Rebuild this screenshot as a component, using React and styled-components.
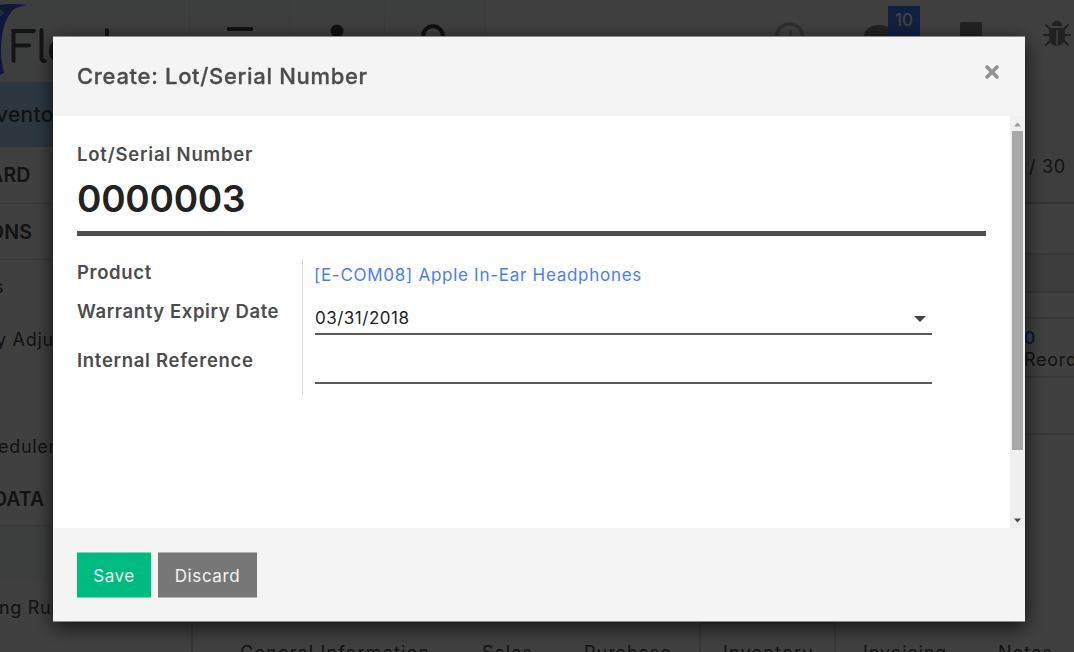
import React from "react";
import styled, { createGlobalStyle } from "styled-components";

const Global = createGlobalStyle`
  * { box-sizing: border-box; }
  html, body { margin: 0; height: 100%; overflow: hidden; background: #fff; }
  body { font-family: Inter, "Liberation Sans", sans-serif; color: #484848; }
  button, input { font: inherit; }
`;

const Screen = styled.div`
  width: 1074px;
  height: 652px;
  overflow: hidden;
  display: flex;
  flex-direction: column;
`;

/* page behind the dialog */
const TopBar = styled.header`
  flex: none;
  height: 82px;
  display: flex;
  background: #fcfcfc;
  border-bottom: 1px solid #ececec;
`;
const LogoCell = styled.div`
  flex: none;
  width: 190px;
  height: 82px;
  background: #f4f8f5;
  border-right: 1px solid #e6eae8;
`;
const NavCell = styled.div`
  flex: none;
  width: ${(p) => p.$w}px;
  height: 81px;
  padding-top: 24px;
  background: #f4f8f5;
  border-right: 1px solid #e6eae8;
  display: flex;
  justify-content: center;
`;
const TrayIcons = styled.div`
  flex: 1;
  padding: 20px 0 0 288px;
  display: flex;
  align-items: flex-start;
`;
const TraySlot = styled.div`
  position: relative;
  width: ${(p) => p.$w}px;
  flex: none;
`;
const Badge = styled.span`
  position: absolute;
  left: 25px;
  top: -14px;
  width: 32px;
  height: 32px;
  background: #4880ff;
  color: #ffffff;
  font-size: 17px;
  font-weight: 500;
  line-height: 28px;
  text-align: center;
`;
const Columns = styled.div`
  flex: 1;
  min-height: 0;
  display: flex;
`;
const Sidebar = styled.nav`
  width: 193px;
  flex: none;
  border-right: 2px solid #d2d2d2;
  overflow: hidden;
`;
const SideItem = styled.div`
  height: ${(p) => p.$h}px;
  display: flex;
  align-items: center;
  white-space: nowrap;
  font-size: ${(p) => p.$size || 18}px;
  font-weight: ${(p) => p.$weight || 400};
  letter-spacing: ${(p) => p.$ls ?? 0.7}px;
  color: ${(p) => p.$color || "#484848"};
  background: ${(p) => p.$bg || "transparent"};
  border-bottom: ${(p) => (p.$line ? "1px solid #e4e4e4" : "none")};
  text-indent: ${(p) => p.$indent || 0}px;
`;
const Content = styled.main`
  flex: 1;
  display: flex;
  flex-direction: column;
  align-items: stretch;
`;
const Band = styled.div`
  flex: none;
  height: ${(p) => p.$h}px;
  padding: ${(p) => p.$pad || "0"};
  background: ${(p) => p.$bg || "#ffffff"};
  border-bottom: 2px solid ${(p) => p.$line || "#dedede"};
  font-size: 18px;
  line-height: 22px;
  letter-spacing: 0.7px;
  overflow: hidden;
  white-space: nowrap;
`;
const StatValue = styled.div`
  color: #4068e0;
  font-weight: 600;
  font-size: 17px;
  line-height: 21px;
`;
const TabRow = styled.div`
  margin-top: 187px;
  height: 60px;
  display: flex;
  padding-left: 19px;
`;
const Tab = styled.div`
  flex: none;
  width: ${(p) => p.$w}px;
  padding: 16px 0 0 ${(p) => p.$pl ?? 28}px;
  font-size: 18px;
  line-height: 26px;
  letter-spacing: ${(p) => p.$ls ?? 1}px;
  white-space: nowrap;
  border: ${(p) => (p.$on ? "2px solid #dcdcdc" : "2px solid transparent")};
  border-width: 2px ${(p) => (p.$on ? 2 : 0)}px 0;
  border-radius: 4px 4px 0 0;
`;

/* dialog */
const Backdrop = styled.div`
  position: fixed;
  inset: 0;
  background: rgba(0, 0, 0, 0.75);
  display: flex;
  align-items: flex-start;
  padding: 36px 49px 0 53px;
`;
const Dialog = styled.section`
  width: 972px;
  height: 586px;
  display: flex;
  flex-direction: column;
  background: #f4f4f4;
  border: solid #8a8a8a;
  border-width: 1px 0;
  box-shadow: 0 5px 20px rgba(0, 0, 0, 0.75);
`;
const DialogHeader = styled.header`
  height: 79px;
  flex: none;
  display: flex;
  justify-content: space-between;
  padding: 23px 25px 0 24px;
`;
const Title = styled.h3`
  margin: 0;
  font-size: 22px;
  line-height: 32px;
  font-weight: 500;
  letter-spacing: 0.68px;
  color: #4c4c4c;
  -webkit-text-stroke: 0.3px #4c4c4c;
`;
const Close = styled.button`
  padding: 4px 0 0;
  border: 0;
  background: none;
  height: 24px;
  display: flex;
`;
const DialogBody = styled.div`
  height: 412px;
  flex: none;
  display: flex;
  background: #fff;
`;
const Form = styled.div`
  flex: 1;
  padding: 26px 24px 0;
`;
const Label = styled.label`
  display: block;
  font-size: 18.5px;
  line-height: 24px;
  font-weight: 600;
  letter-spacing: ${(p) => p.$ls ?? 0.65}px;
  color: #4c4c4c;
  white-space: nowrap;
`;
const SerialNumber = styled.div`
  width: 909px;
  height: 70px;
  padding-top: 9px;
  font-size: 37px;
  line-height: 48px;
  font-weight: 600;
  letter-spacing: -0.25px;
  color: #222;
  border-bottom: 5px solid #4e4e4e;
`;
const Group = styled.div`
  display: flex;
  margin-top: 23px;
  height: 136px;
`;
const Labels = styled.div`
  width: 226px;
  flex: none;
  border-right: 1px solid #d6d6d6;
  display: flex;
  flex-direction: column;
`;
const LabelSlot = styled.div`
  height: ${(p) => p.$h}px;
  padding-top: 1px;
  flex: none;
`;
const Values = styled.div`
  margin-left: 12px;
  width: 617px;
`;
const ProductLink = styled.a`
  display: block;
  height: 41px;
  padding-top: 3px;
  font-size: 17px;
  line-height: 26px;
  letter-spacing: 0.72px;
  text-indent: -1px;
  color: #4c7cf5;
`;
const Field = styled.div`
  height: ${(p) => p.$h}px;
  display: flex;
  justify-content: space-between;
  padding: 5px 5px 0 0;
  font-size: 17px;
  line-height: 26px;
  letter-spacing: 0.5px;
  color: #222;
  border-bottom: 2px solid #5a5a5a;
`;
const Scrollbar = styled.div`
  width: 15px;
  background: #f0f0f0;
  display: flex;
  flex-direction: column;
  align-items: center;
  justify-content: space-between;
`;
const ScrollTop = styled.div`
  display: flex;
  flex-direction: column;
  align-items: center;
  svg { margin: 6px 0 4px; display: block; }
`;
const Thumb = styled.div`
  width: 11px;
  height: 319px;
  background: #a8a8a8;
`;
const ScrollDown = styled.svg`
  display: block;
  margin-bottom: 5px;
`;
const DialogFooter = styled.footer`
  flex: 1;
  padding: 24px;
  display: flex;
  gap: 7px;
`;
const Button = styled.button`
  width: ${(p) => p.$w}px;
  height: 46px;
  padding: 1px 0 0;
  border: solid ${(p) => p.$edge};
  border-width: 1px 0;
  background: ${(p) => p.$bg};
  color: #f4f4f4;
  font-size: 17px;
  letter-spacing: ${(p) => p.$ls}px;
`;

export default function App() {
  return (
    <>
      <Global />
      <Screen>
        <TopBar>
          <LogoCell>
            <svg width="189" height="81" viewBox="0 0 189 81">
              <path d="M0 5 Q10 3 27 5 Q18 7 14 9 Q2 20 1 48 Q1 62 4 73 L0 75Z" fill="#4060e8" />
              <path d="M0 9 Q4 11 4 13 L0 17Z" fill="#8ca8f8" />
              <g fill="none" stroke="#505050" strokeWidth="4" strokeLinecap="round">
                <path d="M13.500 61V31H34M14 45.500H29M41.500 30V58Q41.500 61 45 61M107 30V61" />
                <circle cx="62" cy="51" r="11" />
              </g>
            </svg>
          </LogoCell>
          <NavCell $w={100}>
            <svg width="28" height="30"><path d="M1 5h26M1 15h26" stroke="#404040" strokeWidth="4" /></svg>
          </NavCell>
          <NavCell $w={95}>
            <svg width="28" height="30"><circle cx="14" cy="7" r="6.500" fill="#404040" /></svg>
          </NavCell>
          <NavCell $w={101}>
            <svg width="28" height="30"><circle cx="12" cy="12" r="9.800" fill="none" stroke="#404040" strokeWidth="4" /></svg>
          </NavCell>
          <TrayIcons>
            <TraySlot $w={89}>
              <svg width="32" height="32">
                <circle cx="15.500" cy="17" r="13" fill="none" stroke="#bcbcbc" strokeWidth="3.500" />
                <path d="M16.500 10v10" stroke="#bcbcbc" strokeWidth="2.500" />
              </svg>
            </TraySlot>
            <TraySlot $w={95}>
              <svg width="36" height="30"><ellipse cx="16" cy="16" rx="15" ry="11" fill="#888" /></svg>
              <Badge>10</Badge>
            </TraySlot>
            <TraySlot $w={85}>
              <svg width="26" height="26"><rect x="2" y="2" width="22" height="22" rx="1.500" fill="#888" /></svg>
            </TraySlot>
            <TraySlot $w={30}>
              <svg width="28" height="28" viewBox="0 0 28 28">
                <path d="M9 6Q9 1 14 1T19 6Z" fill="#848484" />
                <path d="M6 8H22V18Q22 25 14 26Q6 25 6 18Z" fill="#848484" />
                <path d="M14 10V25" stroke="#f4f4f4" strokeWidth="1.500" />
                <path d="M7 9L3 5M21 9L25 5M7 15H1M21 15H27M7 21L3 25M21 21L25 25" stroke="#848484" strokeWidth="2" strokeLinecap="round" />
              </svg>
            </TraySlot>
          </TrayIcons>
        </TopBar>
        <Columns>
          <Sidebar>
            <SideItem $h={65} $bg="#aedcfc" $size={21} $weight={500} $ls={0.3} $indent={-4}>ventory</SideItem>
            <SideItem $h={57} $size={19.5} $weight={600} $ls={0.2} $indent={-11} $line>ARD</SideItem>
            <SideItem $h={56} $size={19.5} $weight={600} $ls={0.2} $indent={-11} $line>ONS</SideItem>
            <SideItem $h={52} $indent={-6}>s</SideItem>
            <SideItem $h={54} $indent={-4}>y Adjustments</SideItem>
            <SideItem $h={54} />
            <SideItem $h={53} $indent={-2}>edulers</SideItem>
            <SideItem $h={53} $size={19.5} $weight={600} $ls={0} $indent={-7} $line>DATA</SideItem>
            <SideItem $h={53} $bg="#f3f8f6" $color="#2b9c8c" $indent={-9}>s</SideItem>
            <SideItem $h={56} $indent={-1}>ng Rules</SideItem>
          </Sidebar>
          <Content>
            <Band $h={122} $bg="#f6f6f6" $line="#c8c8dc" $pad="74px 0 0 836px">/ 30</Band>
            <Band $h={51} $bg="#fcfcfc" />
            <Band $h={38} $bg="#f2f2f2" />
            <Band $h={26} />
            <Band $h={59} $pad="9px 0 0 831px">
              <StatValue>0</StatValue>
              Reordering
            </Band>
            <Band $h={57} />
            <TabRow>
              <Tab $w={242} $ls={1.15}>General Information</Tab>
              <Tab $w={102}>Sales</Tab>
              <Tab $w={143}>Purchase</Tab>
              <Tab $w={137} $on $pl={22} $ls={1.2}>Inventory</Tab>
              <Tab $w={134} $pl={27} $ls={0.85}>Invoicing</Tab>
              <Tab $w={120} $pl={28}>Notes</Tab>
            </TabRow>
          </Content>
        </Columns>
      </Screen>
      <Backdrop>
        <Dialog role="dialog">
          <DialogHeader>
            <Title>Create: Lot/Serial Number</Title>
            <Close aria-label="Close">
              <svg width="16" height="16" viewBox="0 0 16 16">
                <path d="M3 3L13 13M13 3L3 13" stroke="#929292" strokeWidth="3.600" strokeLinecap="round" />
              </svg>
            </Close>
          </DialogHeader>
          <DialogBody>
            <Form>
              <Label $ls={0.8}>Lot/Serial Number</Label>
              <SerialNumber>0000003</SerialNumber>
              <Group>
                <Labels>
                  <LabelSlot $h={39}><Label>Product</Label></LabelSlot>
                  <LabelSlot $h={49}><Label $ls={0.6}>Warranty Expiry Date</Label></LabelSlot>
                  <LabelSlot $h={48}><Label $ls={0.7}>Internal Reference</Label></LabelSlot>
                </Labels>
                <Values>
                  <ProductLink>[E-COM08] Apple In-Ear Headphones</ProductLink>
                  <Field $h={35}>
                    03/31/2018
                    <svg width="14" height="24"><path d="M1 11H13L7 17Z" fill="#444" /></svg>
                  </Field>
                  <Field $h={49} />
                </Values>
              </Group>
            </Form>
            <Scrollbar>
              <ScrollTop>
                <svg width="7" height="5"><path d="M0 4.500H7L3.500 .5Z" fill="#999" /></svg>
                <Thumb />
              </ScrollTop>
              <ScrollDown width="7" height="5"><path d="M0 .5H7L3.500 4.500Z" fill="#484848" /></ScrollDown>
            </Scrollbar>
          </DialogBody>
          <DialogFooter>
            <Button $w={74} $bg="#00bb80" $edge="#78d7b9" $ls={0.5}>Save</Button>
            <Button $w={99} $bg="#777" $edge="#b4b4b4" $ls={0.6}>Discard</Button>
          </DialogFooter>
        </Dialog>
      </Backdrop>
    </>
  );
}
